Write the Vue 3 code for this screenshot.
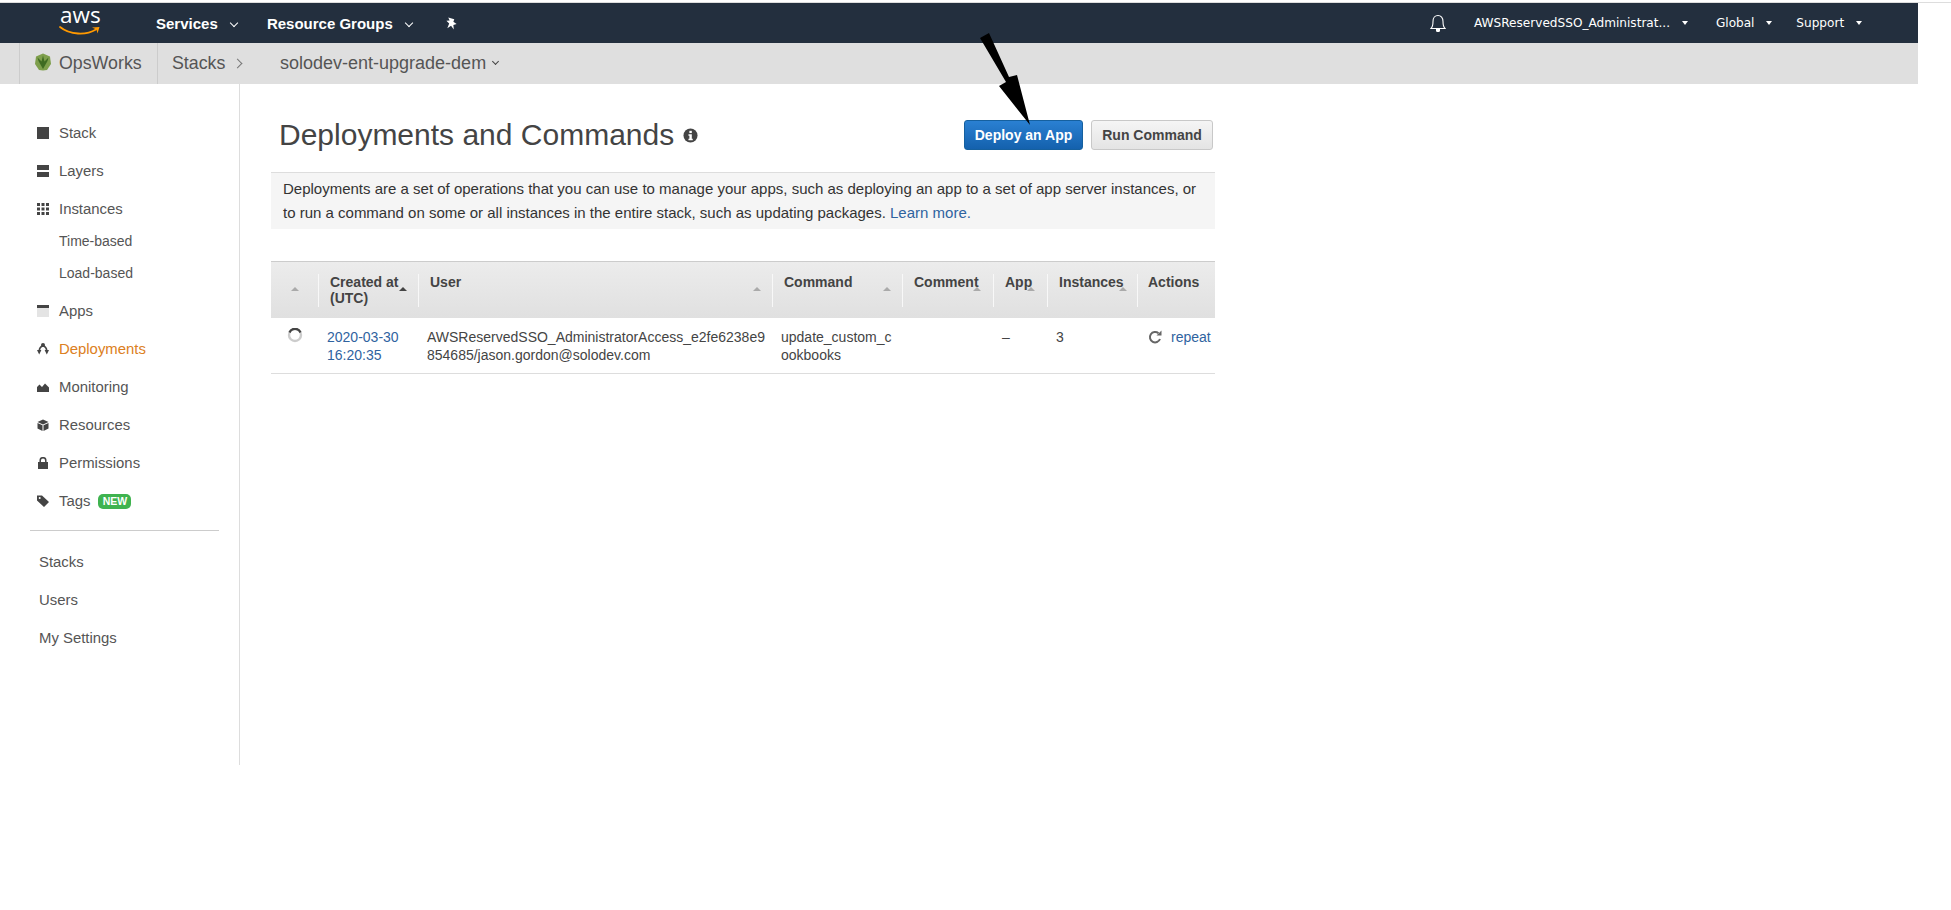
<template>
  <div class="page">
    <div class="top-line"></div>
    <header class="topbar">
      <div class="aws-logo">
        <span class="aws-text">aws</span>
        <svg class="aws-smile" viewBox="0 0 41 10" aria-hidden="true">
          <path d="M1 1C11 9 27 9.500 37 3.500" fill="none" stroke="#f90" stroke-width="1.800" stroke-linecap="round" />
          <path d="M33 1.500L40.500 1L38.500 7.500L37.500 3.500Z" fill="#f90" />
        </svg>
      </div>
      <a class="top-link bold first">Services <i class="caret"></i></a>
      <a class="top-link bold second">Resource Groups <i class="caret"></i></a>
      <svg class="pin" viewBox="0 0 14 14" aria-hidden="true">
        <path d="M3.500 0.500L10 2.500L9 5L12.500 7.500L9 8.500L9.500 13.500L6.500 9.500L2.500 12L4.500 7L1.500 4L5 3.800Z" fill="#fff" />
      </svg>
      <div class="top-right">
        <svg class="bell" viewBox="0 0 16 18" aria-hidden="true">
          <path d="M1 14.500C3 12.500 3 10.500 3 7.500C3 4 5 1.500 8 1.500C11 1.500 13 4 13 7.500C13 10.500 13 12.500 15 14.500Z" fill="none" stroke="#fff" stroke-width="1.100" />
          <path d="M6 15h4v1.200a2 2 0 0 1-4 0Z" fill="#fff" />
        </svg>
        <a class="top-link thin user">AWSReservedSSO_Administrat... <i class="caret small"></i></a>
        <a class="top-link thin region">Global <i class="caret small"></i></a>
        <a class="top-link thin support">Support <i class="caret small"></i></a>
      </div>
    </header>

    <div class="subbar">
      <div class="brand">
        <svg class="ops-logo" viewBox="0 0 16 18" aria-hidden="true">
          <path d="M8 0.500L15 3.500L16 11L12 17L8 17.500L4 17L0 11L1 3.500Z" fill="#7e9f4c" />
          <path d="M8 16L3.500 8L2.500 4.500L6.500 8.500L8 2.500L9.500 8.500L13.500 4.500L12.500 8Z" fill="#3f6b22" />
        </svg>
        <span>OpsWorks</span>
      </div>
      <div class="crumb">Stacks <i class="crumb-sep"></i></div>
      <div class="stack-name">solodev-ent-upgrade-dem <i class="caret dark"></i></div>
    </div>

    <div class="body">
      <aside class="sidebar">
        <a v-for="item in navItems" :key="item.label" class="nav-item" :class="{ sub: item.sub, active: item.active }">
          <svg v-if="item.icon" class="nav-icon" viewBox="0 0 12 12" aria-hidden="true" v-html="item.icon"></svg>
          <span>{{ item.label }}</span>
          <span v-if="item.badge" class="badge">{{ item.badge }}</span>
        </a>
        <div class="nav-divider"></div>
        <a v-for="label in lowerItems" :key="label" class="nav-item lower">{{ label }}</a>
      </aside>

      <main class="content">
        <div class="title-row">
          <h1>Deployments and Commands</h1>
          <svg class="info" viewBox="0 0 16 16" aria-hidden="true">
            <circle cx="8" cy="8" r="7.500" fill="#444" />
            <rect x="6.800" y="3" width="2.600" height="2.400" fill="#fff" />
            <path d="M5.800 6.600H9.400V11.400H10.400V13H5.800V11.400H6.800V8.200H5.800Z" fill="#fff" />
          </svg>
          <div class="actions">
            <button class="btn primary" type="button">Deploy an App</button>
            <button class="btn" type="button">Run Command</button>
          </div>
        </div>

        <div class="intro">
          Deployments are a set of operations that you can use to manage your apps, such as deploying an app to a set of app server instances, or
          to run a command on some or all instances in the entire stack, such as updating packages.
          <a class="link">Learn more.</a>
        </div>

        <div class="table">
          <div class="thead">
            <div v-for="(col, i) in columns" :key="i" class="th">
              <span class="th-label">{{ col.label }}</span>
              <i v-if="col.sort" class="sort" :class="{ on: col.on }" :style="{ left: col.sort + 'px' }"></i>
            </div>
          </div>
          <div class="trow">
            <div class="td status">
              <svg class="spinner" viewBox="0 0 16 16" aria-hidden="true">
                <circle cx="8" cy="8" r="6" fill="none" stroke="#ccc" stroke-width="2.400" />
                <path d="M2.500 5.500A6 6 0 0 1 13.500 5.500" fill="none" stroke="#444" stroke-width="2.400" />
              </svg>
            </div>
            <div class="td"><a class="link">2020-03-30<br />16:20:35</a></div>
            <div class="td wrap">AWSReservedSSO_AdministratorAccess_e2fe6238e9854685/jason.gordon@solodev.com</div>
            <div class="td wrap">update_custom_cookbooks</div>
            <div class="td"></div>
            <div class="td">–</div>
            <div class="td">3</div>
            <div class="td repeat">
              <svg class="repeat-icon" viewBox="0 0 14 14" aria-hidden="true">
                <path d="M12 9A5.200 5.200 0 1 1 10.500 3.200" fill="none" stroke="#666" stroke-width="2" />
                <path d="M8.500 5.500H13.500V0.500Z" fill="#666" />
              </svg>
              <a class="link">repeat</a>
            </div>
          </div>
        </div>
      </main>
    </div>

    <svg class="arrow" viewBox="0 0 70 110" aria-hidden="true">
      <path d="M0 5L9 0L29 44L37 42L50 92L19 53L26 49Z" fill="#000" />
    </svg>
  </div>
</template>

<script setup>
const navItems = [
  { label: 'Stack', icon: '<rect x="0" y="0" width="12" height="12" fill="#444"/>' },
  { label: 'Layers', icon: '<rect x="0" y="0" width="12" height="5" fill="#444"/><rect x="0" y="7" width="12" height="5" fill="#444"/>' },
  { label: 'Instances', icon: '<path d="M0 0h3v3H0zM4.500 0h3v3h-3zM9 0h3v3H9zM0 4.500h3v3H0zM4.500 4.500h3v3h-3zM9 4.500h3v3H9zM0 9h3v3H0zM4.500 9h3v3h-3zM9 9h3v3H9z" fill="#444"/>' },
  { label: 'Time-based', sub: true },
  { label: 'Load-based', sub: true },
  { label: 'Apps', icon: '<rect x="0" y="0" width="12" height="3" fill="#444"/><rect x="0" y="3" width="12" height="9" fill="#e4e4e4"/>' },
  { label: 'Deployments', active: true, icon: '<path d="M2.200 7.500C2.500 5 4 3.500 6 2.500C8 3.500 9.500 5 9.800 7.500" stroke="#444" stroke-width="1.500" fill="none"/><circle cx="6" cy="2" r="2" fill="#444"/><path d="M0 7h4.400L2.200 11.500zM7.600 7H12L9.800 11.500z" fill="#444"/>' },
  { label: 'Monitoring', icon: '<path d="M0 11V6L2.500 3.500L5 6L8 2.500L12 6.500V11Z" fill="#444"/>' },
  { label: 'Resources', icon: '<path d="M6 0.500L11.500 3L6 5.500L0.500 3Z" fill="#444"/><path d="M0.500 4L5.500 6.300V12L0.500 9.500ZM11.500 4L6.500 6.300V12L11.500 9.500Z" fill="#444"/>' },
  { label: 'Permissions', icon: '<rect x="1" y="5" width="10" height="7" fill="#444"/><path d="M3.200 5.500V3.500a2.800 2.800 0 0 1 5.600 0V5.500" fill="none" stroke="#444" stroke-width="1.500"/>' },
  { label: 'Tags', badge: 'NEW', icon: '<path d="M0 0.500H5L12 7L7 12L0 5.500ZM2.700 2A1 1 0 1 0 2.700 4A1 1 0 1 0 2.700 2Z" fill="#444" fill-rule="evenodd"/>' }
]

const lowerItems = ['Stacks', 'Users', 'My Settings']

// sort = offset of the little triangle inside the header cell
const columns = [
  { label: '', sort: 20 },
  { label: 'Created at (UTC)', sort: 80, on: true },
  { label: 'User', sort: 334 },
  { label: 'Command', sort: 110 },
  { label: 'Comment', sort: 70 },
  { label: 'App', sort: 33 },
  { label: 'Instances', sort: 71 },
  { label: 'Actions' }
]
</script>

<style scoped>
.page {
  position: relative;
  padding-top: 2px;
  font-family: "Liberation Sans", Arial, sans-serif;
  color: #444;
  font-size: 14px;
}
.top-line {
  height: 1px;
  background: #ddd;
}

.topbar {
  display: flex;
  align-items: center;
  width: 1918px;
  height: 40px;
  background: #232f3e;
  color: #fff;
}
.aws-logo {
  position: relative;
  width: 42px;
  height: 40px;
  margin-left: 59px;
}
.aws-text {
  display: block;
  padding-left: 1px;
  font-family: "Open Sans", sans-serif;
  font-size: 22.500px;
  line-height: 24px;
}
.aws-smile {
  position: absolute;
  left: 0;
  top: 23px;
  width: 41px;
  height: 10px;
}
.top-link {
  white-space: nowrap;
}
.top-link.bold {
  font-weight: bold;
  font-size: 15px;
}
.top-link.first {
  margin-left: 55px;
}
.top-link.second {
  margin-left: 30px;
}
.top-link.thin {
  font-family: "DejaVu Sans", sans-serif;
  font-size: 12.100px;
}
.caret {
  display: inline-block;
  width: 5px;
  height: 5px;
  margin: 0 0 3px 9px;
  border-right: 1.500px solid #fff;
  border-bottom: 1.500px solid #fff;
  transform: rotate(45deg);
}
.caret.small {
  width: 0;
  height: 0;
  margin: 0 0 2px 8px;
  border: 3.500px solid transparent;
  border-top: 4px solid #fff;
  border-bottom: 0;
  transform: none;
}
.caret.dark {
  width: 4px;
  height: 4px;
  margin: 0 0 4px 4px;
  border-color: #444;
}
.pin {
  width: 13px;
  height: 13px;
  margin-left: 33px;
}
.top-right {
  display: flex;
  align-items: center;
  margin-left: auto;
  padding-right: 56px;
}
.bell {
  width: 16px;
  height: 18px;
  margin-right: 28px;
}
.top-link.user {
  margin-right: 28px;
}
.top-link.region {
  margin-right: 24px;
}

.subbar {
  display: flex;
  align-items: stretch;
  width: 1918px;
  height: 41px;
  padding-left: 19px;
  box-sizing: border-box;
  background: #dfdfdf;
  font-size: 17.800px;
  color: #555;
}
.brand {
  display: flex;
  align-items: center;
  gap: 8px;
  width: 139px;
  padding-left: 15px;
  box-sizing: border-box;
  border-left: 1px solid #ccc;
  border-right: 1px solid #ccc;
}
.ops-logo {
  width: 16px;
  height: 18px;
  margin-bottom: 3px;
}
.crumb {
  display: flex;
  align-items: center;
  gap: 9px;
  margin-left: 14px;
  width: 108px;
}
.crumb-sep {
  width: 6px;
  height: 6px;
  border-top: 1px solid #777;
  border-right: 1px solid #777;
  transform: rotate(45deg);
}
.stack-name {
  display: flex;
  align-items: center;
  gap: 3px;
  font-size: 18px;
}

.body {
  display: flex;
}
.sidebar {
  box-sizing: border-box;
  width: 240px;
  height: 681px;
  padding: 30px 20px 0 30px;
  border-right: 1px solid #ddd;
}
.nav-item {
  display: flex;
  align-items: center;
  height: 38px;
  padding-left: 7px;
  font-size: 14.900px;
  color: #555;
}
.nav-item.sub {
  box-sizing: border-box;
  height: 32px;
  padding-left: 29px;
  padding-bottom: 7px;
  font-size: 14px;
}
.nav-item.active {
  color: #dc8022;
}
.nav-item.lower {
  padding-left: 9px;
}
.nav-icon {
  width: 12px;
  height: 12px;
  margin-right: 10px;
  flex: none;
}
.badge {
  box-sizing: border-box;
  width: 33px;
  height: 15px;
  margin-left: 8px;
  border-radius: 5px;
  background: #3fb34f;
  color: #fff;
  font-size: 10.500px;
  font-weight: bold;
  line-height: 15px;
  text-align: center;
}
.nav-divider {
  height: 1px;
  margin: 10px 0 12px;
  background: #ccc;
}

.content {
  box-sizing: border-box;
  width: 944px;
  margin-left: 31px;
  padding-top: 36px;
}
.title-row {
  display: flex;
  align-items: center;
  height: 30px;
  margin-bottom: 22px;
  padding-left: 8px;
}
h1 {
  margin: 0;
  font-size: 30px;
  font-weight: normal;
  color: #444;
  white-space: nowrap;
}
.info {
  width: 15px;
  height: 15px;
  margin-left: 9px;
}
.actions {
  display: flex;
  gap: 8px;
  margin-left: auto;
  margin-right: 2px;
}
.btn {
  box-sizing: border-box;
  height: 30px;
  width: 122px;
  padding: 0;
  border: 1px solid #c8c8c8;
  border-radius: 3px;
  background: linear-gradient(180deg, #f5f5f5 0%, #e4e4e4 100%);
  font-family: inherit;
  font-size: 14px;
  font-weight: bold;
  color: #444;
}
.btn.primary {
  width: 119px;
  border-color: #15609f;
  background: linear-gradient(180deg, #2a80d2 0%, #1461ad 100%);
  color: #fff;
}
.intro {
  box-sizing: border-box;
  height: 57px;
  padding: 4px 12px 0;
  border-top: 1px solid #ddd;
  background: #f5f5f5;
  font-size: 15px;
  line-height: 24px;
  color: #333;
}
.link {
  color: #2f639f;
}

.table {
  margin-top: 32px;
  font-size: 14px;
}
.thead,
.trow {
  display: grid;
  grid-template-columns: 48px 100px 354px 130px 91px 54px 90px 77px;
}
.thead {
  height: 57px;
  box-sizing: border-box;
  padding-top: 12px;
  border-top: 1px solid #ccc;
  background: linear-gradient(180deg, #ececec 0%, #e0e0e0 100%);
}
.th {
  position: relative;
  height: 33px;
  padding: 0 4px 0 11px;
  border-right: 1px solid #f8f8f8;
  font-size: 14px;
  font-weight: bold;
  line-height: 16px;
  color: #444;
}
.th:last-child {
  padding-left: 10px;
  border-right: 0;
}
.th-label {
  display: block;
}
.sort {
  position: absolute;
  top: 13px;
  width: 0;
  height: 0;
  border-left: 4.500px solid transparent;
  border-right: 4.500px solid transparent;
  border-bottom: 4px solid #aaa;
}
.sort.on {
  border-bottom-color: #444;
}
.trow {
  height: 56px;
  box-sizing: border-box;
  padding-top: 10px;
  border-bottom: 1px solid #ddd;
  line-height: 18px;
  color: #444;
}
.td {
  padding: 0 4px 0 8px;
  overflow: hidden;
}
.td.wrap {
  word-break: break-all;
}
.td.status {
  padding: 0 0 0 16px;
}
.spinner {
  display: block;
  width: 16px;
  height: 16px;
  margin-top: -1px;
}
.td.repeat {
  display: flex;
  align-items: flex-start;
  gap: 9px;
  padding-left: 10px;
  padding-right: 0;
  white-space: nowrap;
}
.repeat-icon {
  width: 14px;
  height: 14px;
  margin-top: 2px;
  flex: none;
}

.arrow {
  position: absolute;
  left: 980px;
  top: 33px;
  width: 70px;
  height: 110px;
}
</style>

<style>
body {
  background: #fff;
}
</style>
